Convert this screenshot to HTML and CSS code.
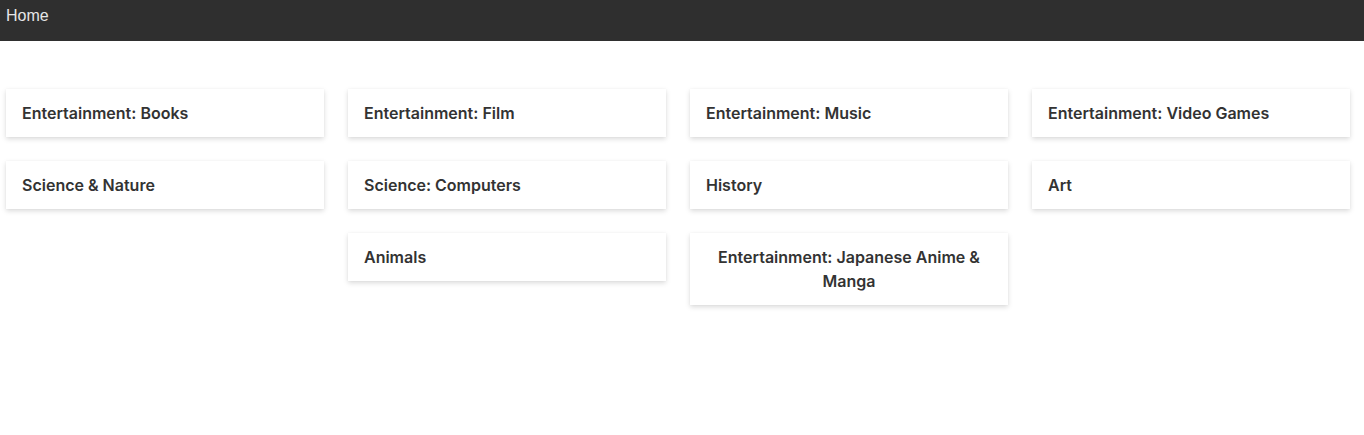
FILE: index.html
```html
<!DOCTYPE html>
<html lang="en">
<head>
<meta charset="utf-8">
<title>Categories</title>
<link rel="stylesheet" href="styles.css">
</head>
<body>
<header class="topbar"><span class="topbar-link">Home</span></header>
<main class="categories">
  <div class="card"><span class="card-label">Entertainment: Books</span></div>
  <div class="card"><span class="card-label">Entertainment: Film</span></div>
  <div class="card"><span class="card-label">Entertainment: Music</span></div>
  <div class="card"><span class="card-label">Entertainment: Video Games</span></div>
  <div class="card"><span class="card-label">Science &amp; Nature</span></div>
  <div class="card"><span class="card-label">Science: Computers</span></div>
  <div class="card"><span class="card-label">History</span></div>
  <div class="card"><span class="card-label">Art</span></div>
  <div class="card"><span class="card-label">Animals</span></div>
  <div class="card"><span class="card-label">Entertainment: Japanese Anime &amp; Manga</span></div>
</main>
</body>
</html>
```
FILE: styles.css
```css
* { box-sizing: border-box; }
html, body { margin: 0; padding: 0; background: #fff; }
body {
  font-family: "Liberation Sans", Arial, sans-serif;
  min-height: 100vh;
}

.topbar {
  height: 41px;
  background: #2f2f2f;
  padding: 7px 6px 0;
}
.topbar-link {
  color: #e6e6e6;
  font-size: 16px;
  line-height: 18px;
}

.categories {
  display: flex;
  flex-wrap: wrap;
  justify-content: center;
  align-items: flex-start;
  gap: 24px;
  margin: 48px 14px 0 6px;
  padding-bottom: 24px;
}

.card {
  display: flex;
  width: 318px;
  padding: 12px 16px;
  background: #fff;
  box-shadow: 0 2px 5px rgba(0, 0, 0, 0.15), 0 0 1px rgba(0, 0, 0, 0.06);
}
.card-label {
  font-family: Inter, "Noto Sans", sans-serif;
  font-weight: 600;
  font-size: 16px;
  line-height: 24px;
  color: #333;
  text-align: center;
}
```
